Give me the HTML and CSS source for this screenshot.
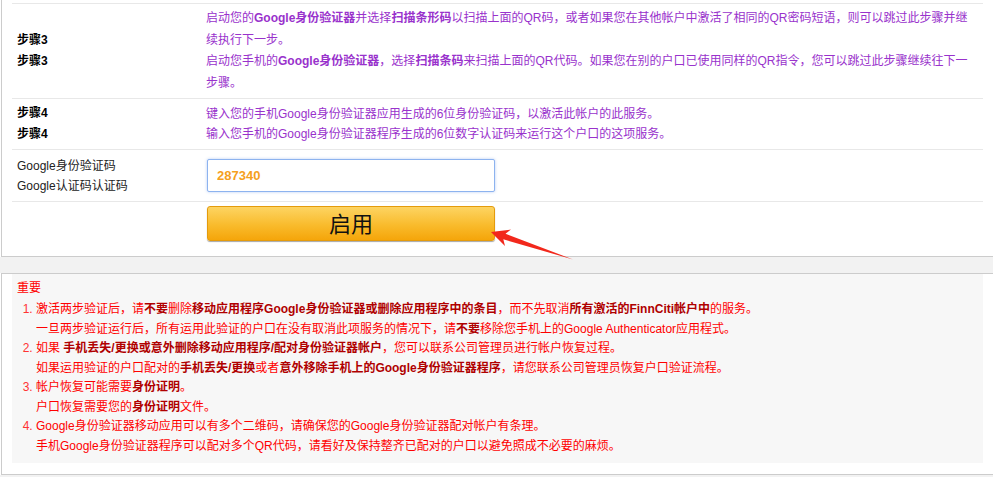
FILE: index.html
```html
<!DOCTYPE html>
<html lang="zh-CN">
<head>
    <meta charset="UTF-8">
    <title>Google身份验证器</title>
    <link rel="stylesheet" href="styles.css">
</head>
<body>

    <div class="panel">
        <div class="row step-big">
            <div class="label"><b>步骤3</b><br><b>步骤3</b></div>
            <div class="desc">
                <p>启动您的<b>Google身份验证器</b>并选择<b>扫描条形码</b>以扫描上面的QR码，或者如果您在其他帐户中激活了相同的QR密码短语，则可以跳过此步骤并继续执行下一步。</p>
                <p>启动您手机的<b>Google身份验证器</b>，选择<b>扫描条码</b>来扫描上面的QR代码。如果您在别的户口已使用同样的QR指令，您可以跳过此步骤继续往下一步骤。</p>
            </div>
        </div>
        <div class="row">
            <div class="label"><b>步骤4</b><br><b>步骤4</b></div>
            <div class="desc">
                <p>键入您的手机Google身份验证器应用生成的6位身份验证码，以激活此帐户的此服务。</p>
                <p>输入您手机的Google身份验证器程序生成的6位数字认证码来运行这个户口的这项服务。</p>
            </div>
        </div>
        <div class="row row-input">
            <div class="label plain">Google身份验证码<br>Google认证码认证码</div>
            <div class="field">
                <input type="text" class="code" value="287340">
            </div>
        </div>
        <div class="row row-btn">
            <div class="label"></div>
            <div class="field">
                <button class="btn">启用</button>
            </div>
        </div>
    </div>

    <div class="notice">
        <div class="notice-box">
            <h4>重要</h4>
            <ol>
                <li>
                    <p>激活两步验证后，请<b>不要</b>删除<b>移动应用程序Google身份验证器或删除应用程序中的条目</b>，而不先取消<b>所有激活的FinnCiti帐户中</b>的服务。</p>
                    <p>一旦两步验证运行后，所有运用此验证的户口在没有取消此项服务的情况下，请<b>不要</b>移除您手机上的Google Authenticator应用程式。</p>
                </li>
                <li>
                    <p>如果 <b>手机丢失/更换或意外删除移动应用程序/配对身份验证器帐户</b>，您可以联系公司管理员进行帐户恢复过程。</p>
                    <p>如果运用验证的户口配对的<b>手机丢失/更换</b>或者<b>意外移除手机上的Google身份验证器程序</b>，请您联系公司管理员恢复户口验证流程。</p>
                </li>
                <li>
                    <p>帐户恢复可能需要<b>身份证明</b>。</p>
                    <p>户口恢复需要您的<b>身份证明</b>文件。</p>
                </li>
                <li>
                    <p>Google身份验证器移动应用可以有多个二维码，请确保您的Google身份验证器配对帐户有条理。</p>
                    <p>手机Google身份验证器程序可以配对多个QR代码，请看好及保持整齐已配对的户口以避免照成不必要的麻烦。</p>
                </li>
            </ol>
        </div>
    </div>

    <svg class="arrow" width="993" height="477" viewBox="0 0 993 477">
        <polygon points="491,232 511,229.5 505.5,233.8 573,259.5 503.3,239.3 505,246" fill="#f2281c"/>
    </svg>

</body>
</html>
```

FILE: styles.css
```css
body {
    margin: 0;
    background: #f2f2f2;
    font-family: "Liberation Sans", "Noto Sans CJK SC", sans-serif;
    font-size: 12px;
    color: #333;
    position: relative;
    height: 477px;
    overflow: hidden;
}

p {
    margin: 0;
}

.panel {
    background: #fff;
    margin-left: 1px;
    border-left: 1px solid #ccc;
    border-bottom: 1px solid #ccc;
    box-shadow: -1px 0 0 #fff;
    padding: 3px 10px 10px 10px;
}

.row {
    display: grid;
    grid-template-columns: 194px 1fr;
    align-items: center;
    border-top: 1px solid #e8e8e8;
}

.label {
    padding: 0 5px;
    line-height: 21px;
    color: #000;
}

.label.plain {
    line-height: 20px;
    color: #222;
}

.desc {
    padding: 5px 8px 5px 0;
    line-height: 20px;
    color: #9932cc;
}

.step-big .desc {
    padding: 4px 8px 4px 0;
    line-height: 21.5px;
}

.row-input .field {
    padding: 9px 0;
}

.row-btn {
    align-items: start;
}

.row-btn .field {
    padding: 4px 0 5px 0;
}

.code {
    display: block;
    box-sizing: border-box;
    width: 288px;
    height: 33px;
    margin-left: 1px;
    padding: 0 9px;
    border: 1px solid #8db3ef;
    border-radius: 2px;
    box-shadow: 0 0 3px rgba(90, 140, 230, 0.45);
    font-family: "Liberation Sans", sans-serif;
    font-size: 13px;
    font-weight: bold;
    color: #f5a01e;
    outline: none;
}

.btn {
    display: block;
    box-sizing: border-box;
    width: 288px;
    height: 35px;
    margin-left: 1px;
    border: 1px solid #e49b0c;
    border-radius: 3px;
    background: linear-gradient(#fdd462, #f9bb2c 55%, #f5a50a);
    box-shadow: 0 1px 1px rgba(0, 0, 0, 0.35);
    font-family: "Liberation Sans", "Noto Sans CJK SC", sans-serif;
    font-size: 22px;
    color: #111;
    padding: 2px 0 0 0;
    line-height: 30px;
}

.notice {
    margin: 16px 0 0 1px;
    background: #fff;
    border-top: 1px solid #ccc;
    border-left: 1px solid #ccc;
    border-bottom: 1px solid #ccc;
    box-shadow: -1px 0 0 #fff;
    padding: 0 10px 11px 10px;
}

.notice-box {
    background: #f7f7f7;
    padding: 4px 5px 7px 5px;
    color: #f00;
}

.notice-box h4 {
    margin: 0 0 2px 0;
    font-size: 12px;
    font-weight: normal;
    line-height: 20px;
    color: #f00;
}

.notice-box ol {
    margin: 0;
    padding-left: 19px;
    line-height: 19.5px;
}

.notice-box li::marker {
    color: #f33;
}

.notice-box b {
    color: #b00000;
}

.arrow {
    position: absolute;
    left: 0;
    top: 0;
    pointer-events: none;
}
```
